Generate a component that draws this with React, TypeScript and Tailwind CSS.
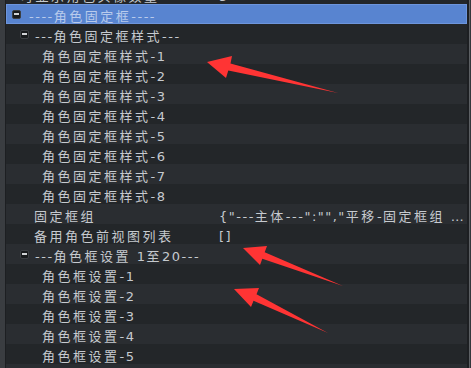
import React from "react";

type RowData = {
  name: string;
  value?: string;
  pad: string;
  icon?: boolean;
  gap?: string;
  selected?: boolean;
};

const rows: RowData[] = [
  { name: "可显示角色头像数量", value: "5", pad: "pl-[14px]" },
  { name: "----角色固定框----", pad: "pl-[5px]", icon: true, gap: "ml-[8px]", selected: true },
  { name: "---角色固定框样式---", pad: "pl-[14px]", icon: true, gap: "ml-[6px]" },
  { name: "角色固定框样式-1", pad: "pl-[36px]" },
  { name: "角色固定框样式-2", pad: "pl-[36px]" },
  { name: "角色固定框样式-3", pad: "pl-[36px]" },
  { name: "角色固定框样式-4", pad: "pl-[36px]" },
  { name: "角色固定框样式-5", pad: "pl-[36px]" },
  { name: "角色固定框样式-6", pad: "pl-[36px]" },
  { name: "角色固定框样式-7", pad: "pl-[36px]" },
  { name: "角色固定框样式-8", pad: "pl-[36px]" },
  { name: "固定框组", value: '{"---主体---":"","平移-固定框组 …', pad: "pl-[28px]" },
  { name: "备用角色前视图列表", value: "[]", pad: "pl-[28px]" },
  { name: "---角色框设置 1至20---", pad: "pl-[14px]", icon: true, gap: "ml-[6px]" },
  { name: "角色框设置-1", pad: "pl-[36px]" },
  { name: "角色框设置-2", pad: "pl-[36px]" },
  { name: "角色框设置-3", pad: "pl-[36px]" },
  { name: "角色框设置-4", pad: "pl-[36px]" },
  { name: "角色框设置-5", pad: "pl-[36px]" },
  { name: "", pad: "pl-[36px]" },
];

// CJK runs are spaced wider than latin runs, like the original widget
function T({ s }: { s: string }) {
  const parts = s.match(/[\u3000-\u9fff\uff00-\uffef]+|[^\u3000-\u9fff\uff00-\uffef]+/g) ?? [];
  return (
    <>
      {parts.map((p, i) =>
        /[\u3000-\u9fff\uff00-\uffef]/.test(p) ? (
          <span key={i} className="tracking-[2.5px]">{p}</span>
        ) : (
          <span key={i} className="tracking-[1.5px]">{p}</span>
        )
      )}
    </>
  );
}

function Minus() {
  return (
    <div className="flex h-[9px] w-[9px] shrink-0 items-center justify-center rounded-[2px] border border-[#3c3f43] bg-[#191b1d]">
      <div className="h-[1.5px] w-[5px] bg-[#d2d4d6]" />
    </div>
  );
}

function Row({ r, i }: { r: RowData; i: number }) {
  const bg = r.selected
    ? "bg-[#5884d0] border border-[#6d95dc]"
    : i % 2 === 1
    ? "bg-[#2a2d31]"
    : "bg-[#232629]";
  const color = r.selected ? "text-[#b9cbec]" : "text-[#c6cacf]";
  return (
    <div className={`flex h-[20px] items-center whitespace-nowrap ${bg} ${color}`}>
      <div className={`flex w-[213px] shrink-0 items-center ${r.pad}`}>
        {r.icon && <Minus />}
        <span className={`pt-[5px] ${r.gap ?? ""}`}>
          <T s={r.name} />
        </span>
      </div>
      <div className="min-w-0 flex-1 overflow-hidden pt-[5px]">
        {r.value && <T s={r.value} />}
      </div>
    </div>
  );
}

function Arrows() {
  return (
    <svg className="pointer-events-none absolute left-0 top-0" width="471" height="368" viewBox="0 0 471 368">
      <g fill="#ff3434">
        <polygon points="207,62 232,56 230.5,63.6 338,93 228.3,70.6 226,78" />
        <polygon points="243,248 267,246 264.7,252.2 343,286 262.3,258.8 260,265" />
        <polygon points="234,289 259,288 256.5,294.3 328,333 253.5,300.7 251,307" />
      </g>
    </svg>
  );
}

export default function App() {
  return (
    <div
      className="relative flex h-[368px] w-[471px] overflow-hidden bg-[#232629] text-[13px] leading-none"
      style={{ fontFamily: '"DejaVu Sans", "Noto Sans CJK SC", sans-serif' }}
    >
      <div className="w-[5px] shrink-0 bg-[#3a3d41]" />
      <div className="w-px shrink-0 bg-[#1d1f22]" />
      <div className="min-w-0 flex-1 -mt-[16px]">
        {rows.map((r, i) => (
          <Row key={i} r={r} i={i} />
        ))}
      </div>
      <div className="flex w-[4px] shrink-0">
        <div className="w-[2px] bg-[#1d1f22]" />
        <div className="w-px bg-[#5d6064]" />
        <div className="w-px bg-[#34373b]" />
      </div>
      <Arrows />
    </div>
  );
}
